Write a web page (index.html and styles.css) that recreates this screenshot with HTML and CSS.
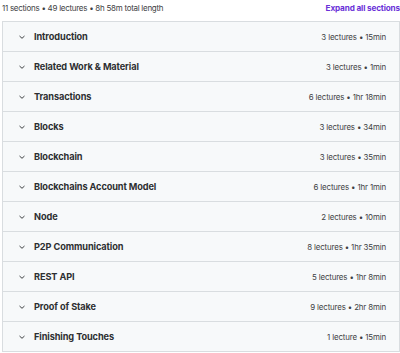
FILE: index.html
```html
<!DOCTYPE html>
<html>
<head>
<meta charset="utf-8">
<link rel="stylesheet" href="styles.css">
</head>
<body>
<div class="page">
  <div class="summary">
    <span class="stats">11 sections • 49 lectures • 8h 58m total length</span>
    <span class="expand">Expand all sections</span>
  </div>
  <div class="sections">
    <div class="row"><div class="left"><svg class="chev" viewBox="0 0 10 10"><path d="M2.5 4 L5 6.3 L7.5 4" /></svg><span class="title">Introduction</span></div><span class="meta">3 lectures • 15min</span></div>
    <div class="row"><div class="left"><svg class="chev" viewBox="0 0 10 10"><path d="M2.5 4 L5 6.3 L7.5 4" /></svg><span class="title">Related Work &amp; Material</span></div><span class="meta">3 lectures • 1min</span></div>
    <div class="row"><div class="left"><svg class="chev" viewBox="0 0 10 10"><path d="M2.5 4 L5 6.3 L7.5 4" /></svg><span class="title">Transactions</span></div><span class="meta">6 lectures • 1hr 18min</span></div>
    <div class="row"><div class="left"><svg class="chev" viewBox="0 0 10 10"><path d="M2.5 4 L5 6.3 L7.5 4" /></svg><span class="title">Blocks</span></div><span class="meta">3 lectures • 34min</span></div>
    <div class="row"><div class="left"><svg class="chev" viewBox="0 0 10 10"><path d="M2.5 4 L5 6.3 L7.5 4" /></svg><span class="title">Blockchain</span></div><span class="meta">3 lectures • 35min</span></div>
    <div class="row"><div class="left"><svg class="chev" viewBox="0 0 10 10"><path d="M2.5 4 L5 6.3 L7.5 4" /></svg><span class="title">Blockchains Account Model</span></div><span class="meta">6 lectures • 1hr 1min</span></div>
    <div class="row"><div class="left"><svg class="chev" viewBox="0 0 10 10"><path d="M2.5 4 L5 6.3 L7.5 4" /></svg><span class="title">Node</span></div><span class="meta">2 lectures • 10min</span></div>
    <div class="row"><div class="left"><svg class="chev" viewBox="0 0 10 10"><path d="M2.5 4 L5 6.3 L7.5 4" /></svg><span class="title">P2P Communication</span></div><span class="meta">8 lectures • 1hr 35min</span></div>
    <div class="row"><div class="left"><svg class="chev" viewBox="0 0 10 10"><path d="M2.5 4 L5 6.3 L7.5 4" /></svg><span class="title">REST API</span></div><span class="meta">5 lectures • 1hr 8min</span></div>
    <div class="row"><div class="left"><svg class="chev" viewBox="0 0 10 10"><path d="M2.5 4 L5 6.3 L7.5 4" /></svg><span class="title">Proof of Stake</span></div><span class="meta">9 lectures • 2hr 8min</span></div>
    <div class="row"><div class="left"><svg class="chev" viewBox="0 0 10 10"><path d="M2.5 4 L5 6.3 L7.5 4" /></svg><span class="title">Finishing Touches</span></div><span class="meta">1 lecture • 15min</span></div>
  </div>
</div>
</body>
</html>
```

FILE: styles.css
```css
html, body {
  margin: 0;
  padding: 0;
  background: #ffffff;
}
body {
  font-family: "Inter", "Liberation Sans", sans-serif;
  color: #2d2f31;
}
.page {
  width: 398px;
  padding: 0 1px 0 2px;
}
.summary {
  height: 21px;
  display: flex;
  justify-content: space-between;
  align-items: flex-start;
  padding-top: 3px;
  box-sizing: border-box;
}
.stats {
  font-size: 8px;
  letter-spacing: -0.28px;
  color: #3e4143;
}
.expand {
  font-size: 8.2px;
  font-weight: 700;
  color: #6a32d8;
  letter-spacing: -0.15px;
}
.sections {
  border: 1px solid #d9dde0;
  border-bottom: none;
}
.row {
  height: 30px;
  box-sizing: border-box;
  border-bottom: 1px solid #d9dde0;
  background: #f7f9fa;
  display: flex;
  align-items: center;
  justify-content: space-between;
  padding: 0 13px 0 14px;
}
.left {
  display: flex;
  align-items: center;
}
.chev {
  width: 10px;
  height: 10px;
  margin-right: 7px;
  fill: none;
  stroke: #3e4143;
  stroke-width: 1;
}
.title {
  font-size: 9.2px;
  font-weight: 700;
  letter-spacing: -0.1px;
}
.meta {
  font-size: 7.9px;
  color: #3e4143;
  letter-spacing: -0.15px;
}
```
